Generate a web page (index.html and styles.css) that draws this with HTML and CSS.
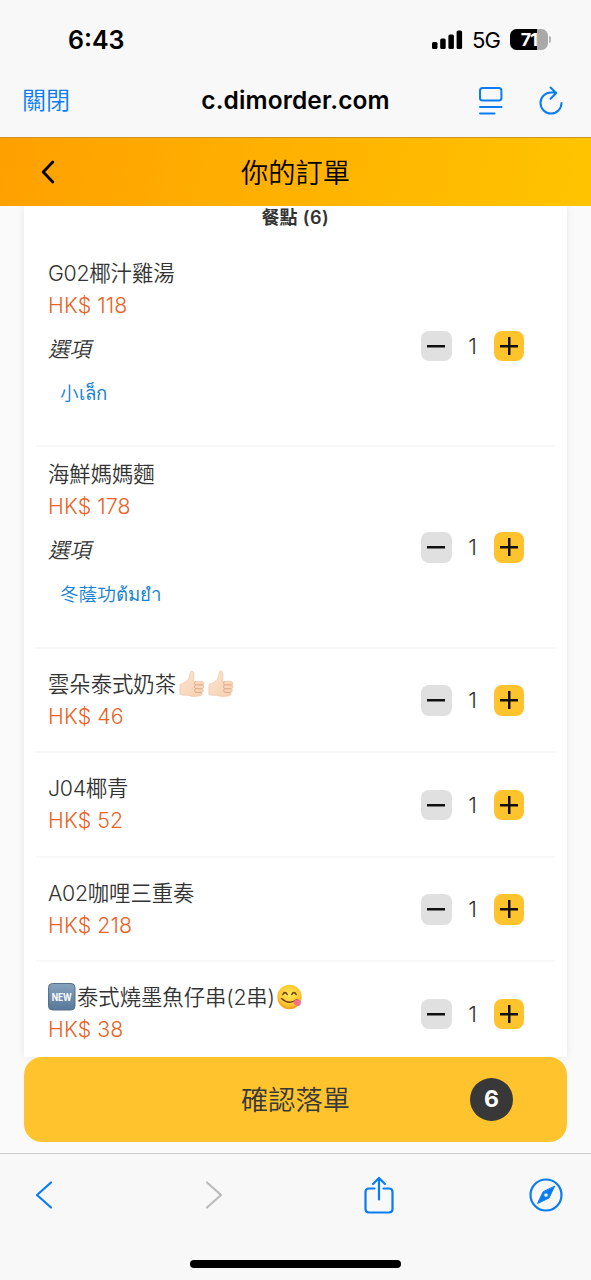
FILE: index.html
```
<!DOCTYPE html>
<html lang="zh-Hant">
<head>
<meta charset="utf-8">
<title>你的訂單</title>
<link rel="stylesheet" href="styles.css">
</head>
<body>
<svg class="defs" aria-hidden="true">
  <defs>
    <linearGradient id="skin" x1="0" y1="0" x2="1" y2="1"><stop offset="0" stop-color="#fce5d0"/><stop offset="1" stop-color="#f5cfb0"/></linearGradient>
    <linearGradient id="steel" x1="0" y1="0" x2="0" y2="1"><stop offset="0" stop-color="#86a3bf"/><stop offset="1" stop-color="#56789a"/></linearGradient>
    <radialGradient id="face" cx=".5" cy=".4" r=".6"><stop offset="0" stop-color="#ffe65a"/><stop offset=".7" stop-color="#fdc92f"/><stop offset="1" stop-color="#f09a1c"/></radialGradient>
    <symbol id="thumb" viewBox="0 0 28 28">
      <path d="M2 14.500C5 13.500 8.800 11.500 10.500 9C11.500 7 11.800 4.500 12.200 2.500C12.600 .8 14.500 .6 15.300 2C16.500 4.200 15.900 8 15.200 11.300H23.500C26.400 11.500 26.600 14.500 24.900 15C26.700 15.800 26.400 18.300 24.500 18.800C26 19.800 25.500 22 23.700 22.400C24.700 23.600 24 25.600 22 25.800C18.500 26.600 13.500 26.800 9.500 25.200C6 25.700 3.500 25 1.800 24.200Z" fill="url(#skin)" stroke="#e9b892" stroke-width=".5"/>
      <path d="M24.900 15L17.800 14.800M24.500 18.800L17.500 18.600M23.700 22.400L17.500 22.300M17.500 11.500C16.300 12.700 16.300 14.300 17.800 14.800C16.300 15.700 16.300 18 17.500 18.600C16.500 19.600 16.500 21.600 17.500 22.300" fill="none" stroke="#d79c7b" stroke-width=".8"/>
    </symbol>
  </defs>
</svg>
<div class="screen">
  <header class="status">
    <span class="clock">6:43</span>
    <div class="status-right">
      <svg class="signal" width="31" height="20" viewBox="0 0 31 20"><rect x="0" y="12" width="5.500" height="7" rx="1.600"/><rect x="8.200" y="8.500" width="5.500" height="10.500" rx="1.600"/><rect x="16.400" y="4.500" width="5.500" height="14.500" rx="1.600"/><rect x="24.600" y=".5" width="5.500" height="18.500" rx="1.600"/></svg>
      <span class="network">5G</span>
      <div class="battery"><span>71</span></div>
      <i class="battery-tip"></i>
    </div>
  </header>
  <nav class="browser-bar">
    <span class="close">關閉</span>
    <span class="host">c.dimorder.com</span>
    <div class="browser-actions">
      <svg width="24" height="30" viewBox="0 0 24 30"><rect x="1" y="2" width="21.400" height="12.600" rx="2.600"/><path d="M1 21H22.500M1 27.500H15.500"/></svg>
      <svg width="24" height="30" viewBox="0 0 24 30"><path d="M22.500 17A10.500 10.500 0 1 1 12 6.500H17M11.500 1.500L17.200 7L11.500 12.700"/></svg>
    </div>
  </nav>
  <div class="title-bar">
    <svg class="back" width="14" height="24" viewBox="0 0 14 24"><path d="M11.800 2L2.200 12L11.800 22"/></svg>
    <h1>你的訂單</h1>
  </div>
  <main class="page">
    <section class="card">
      <h2>餐點<span> (6)</span></h2>
      <article class="item detailed">
        <div class="info"><h3><span>G02</span>椰汁雞湯</h3><p class="price">HK$ 118</p><p class="option">選項</p><p class="choice">小<span>เล็ก</span></p></div>
        <div class="stepper"><button class="minus"></button><b>1</b><button class="plus"></button></div>
      </article>
      <article class="item detailed">
        <div class="info"><h3>海鮮媽媽麵</h3><p class="price">HK$ 178</p><p class="option">選項</p><p class="choice">冬蔭功<span>ต้มยำ</span></p></div>
        <div class="stepper"><button class="minus"></button><b>1</b><button class="plus"></button></div>
      </article>
      <article class="item">
        <div class="info"><h3>雲朵泰式奶茶<svg class="emoji thumb"><use href="#thumb"/></svg><svg class="emoji thumb"><use href="#thumb"/></svg></h3><p class="price">HK$ 46</p></div>
        <div class="stepper"><button class="minus"></button><b>1</b><button class="plus"></button></div>
      </article>
      <article class="item">
        <div class="info"><h3><span>J04</span>椰青</h3><p class="price">HK$ 52</p></div>
        <div class="stepper"><button class="minus"></button><b>1</b><button class="plus"></button></div>
      </article>
      <article class="item">
        <div class="info"><h3><span>A02</span>咖哩三重奏</h3><p class="price">HK$ 218</p></div>
        <div class="stepper"><button class="minus"></button><b>1</b><button class="plus"></button></div>
      </article>
      <article class="item">
        <div class="info"><h3><svg class="emoji new" viewBox="0 0 28 28"><rect x=".5" y=".5" width="26.500" height="26.500" rx="4" fill="url(#steel)" stroke="#58718a"/><text x="13.700" y="17.600" text-anchor="middle" textLength="20" lengthAdjust="spacingAndGlyphs">NEW</text></svg>泰式燒墨魚仔串<span>(2</span>串<span>)</span><svg class="emoji yum" viewBox="0 0 26 26"><circle cx="12.500" cy="13" r="12.200" fill="url(#face)"/><path d="M5.800 10.500Q8 6.500 10.200 10.500M14.700 10.500Q17 6.500 19.200 10.500" fill="none" stroke="#6b3d12" stroke-width="1.500" stroke-linecap="round"/><path d="M4.500 14.500Q12 21.500 20 15.500" fill="none" stroke="#7b3b10" stroke-width="1.500" stroke-linecap="round"/><path d="M16.200 18C18.500 14.800 21.500 14.300 23.300 16.700C24.800 19 23 22.500 20.500 22C18.500 21.500 16.500 20 16.200 18Z" fill="#f4708a"/></svg></h3><p class="price">HK$ 38</p></div>
        <div class="stepper"><button class="minus"></button><b>1</b><button class="plus"></button></div>
      </article>
    </section>
    <div class="confirm"><span>確認落單</span><b class="count">6</b></div>
  </main>
  <footer class="toolbar">
    <div class="tools">
      <svg width="18" height="30" viewBox="0 0 18 30"><path d="M16 2.500L2 15L16 27.500"/></svg>
      <svg class="disabled" width="18" height="30" viewBox="0 0 18 30"><path d="M2 2.500L16 15L2 27.500"/></svg>
      <svg width="30" height="38" viewBox="0 0 30 38"><path d="M10.500 12.500H5Q1.500 12.500 1.500 16V33Q1.500 36.500 5 36.500H25Q28.500 36.500 28.500 33V16Q28.500 12.500 25 12.500H19.500M15 23.500V2M9 8L15 2L21 8"/></svg>
      <svg width="34" height="34" viewBox="0 0 34 34"><circle cx="17" cy="17" r="15.500"/><path class="needle" fill-rule="evenodd" d="M25.500 8.500L20 20L8.500 25.500L14 14ZM17 14.700A2.300 2.300 0 1 0 17 19.300A2.300 2.300 0 1 0 17 14.700Z"/></svg>
    </div>
    <i class="home"></i>
  </footer>
</div>
</body>
</html>
```

FILE: styles.css
```
* { box-sizing: border-box; margin: 0; padding: 0; }
body { background: #f8f8f8; font-family: Inter, "Noto Sans CJK TC", "Noto Sans", sans-serif; }
.defs { position: absolute; width: 0; height: 0; }
.screen { width: 591px; height: 1280px; overflow: hidden; display: flex; flex-direction: column; }
.status { height: 75px; padding: 4px 40px 0 68px; display: flex; align-items: center; justify-content: space-between; flex: none; }
.clock { font-size: 25px; font-weight: 600; }
.status-right { display: flex; align-items: center; }
.signal { margin-right: 9px; }
.network { font-size: 22px; letter-spacing: -.8px; width: 38px; }
.battery { width: 38px; height: 21px; border-radius: 6.500px; background: linear-gradient(90deg, #000 71%, #a9a9a9 71%); color: #fff; display: flex; align-items: center; justify-content: center; font-size: 18px; font-weight: 700; letter-spacing: -.8px; }
.battery-tip { width: 2px; height: 7px; margin-left: 1px; border-radius: 0 3px 3px 0; background: #b5b5b5; }
.browser-bar { height: 62px; padding: 0 28px 12px 22px; display: grid; grid-template-columns: 1fr auto 1fr; align-items: center; flex: none; }
.close { color: #087cf5; font-size: 24px; font-weight: 350; padding-bottom: 3px; }
.host { font-size: 24.500px; font-weight: 600; letter-spacing: .1px; padding-left: 6px; }
.browser-actions { justify-self: end; display: flex; gap: 36px; padding-top: 1px; }
.browser-actions svg, .tools svg, .back { fill: none; stroke: #087cf5; stroke-width: 2.200; stroke-linecap: round; stroke-linejoin: round; }
.browser-actions svg { stroke-width: 2; }
.title-bar { height: 69px; padding: 0 41px; border-top: 1px solid #c99327; background: linear-gradient(100deg, #ffa000, #ffc400); display: grid; grid-template-columns: 14px 1fr 14px; align-items: center; flex: none; }
.title-bar .back { stroke: #000; stroke-width: 2.800; }
.title-bar h1 { text-align: center; font-size: 27.200px; font-weight: 350; padding-bottom: 2px; }
.page { height: 947px; flex: none; padding: 0 24px; background: #fafafa; overflow: hidden; }
.card { height: 850.500px; padding: 1px 12px 0; background: #fff; box-shadow: 0 0 8px rgba(0,0,0,.08); overflow: hidden; color: #333; }
.card h2 { height: 38.500px; line-height: 22px; text-align: center; font-size: 18px; font-weight: 600; white-space: pre; }
.card h2 span { letter-spacing: .6px; }
.item { height: 104.500px; padding: 0 31px 0 12px; border-bottom: 2px solid #f7f7f7; display: flex; align-items: center; justify-content: space-between; }
.item.detailed { height: 201.500px; }
.item.detailed .info { height: 177px; }
.info { line-height: 32px; font-size: 21.330px; font-weight: 350; }
.info h3 { height: 32px; display: flex; align-items: center; font-size: 21.330px; font-weight: 350; }
.info h3 span { letter-spacing: -.3px; }
.price { height: 32px; color: #ea6226; letter-spacing: .1px; }
.option { height: 32px; margin: 12px 0; font-style: italic; }
.choice { height: 32px; padding-left: 12px; font-size: 18.600px; color: #1583d2; }
.stepper { display: flex; align-items: center; padding-top: 1px; }
.stepper button { width: 30.500px; height: 30.500px; border: 0; border-radius: 8px; background: linear-gradient(#111, #111) center / 18px 2.500px no-repeat, #e0e0e0; }
.stepper .plus { background: linear-gradient(#111, #111) center / 18px 2.500px no-repeat, linear-gradient(#111, #111) center / 2.500px 18px no-repeat, #ffc42d; }
.stepper b { width: 42px; text-align: center; font-size: 22px; font-weight: 350; line-height: 30px; }
.emoji { flex: none; }
.thumb { width: 28px; height: 28px; margin-right: -1px; margin-left: 2px; }
.new { width: 28px; height: 28px; margin-right: 1px; }
.new text { font: 700 10px Inter, sans-serif; fill: #fff; }
.yum { width: 26px; height: 26px; margin-left: 2px; }
.confirm { height: 85px; border-radius: 18px; background: #ffc42d; color: #383838; display: grid; grid-template-columns: 1fr auto 1fr; align-items: center; font-size: 27.200px; font-weight: 350; }
.confirm span { grid-column: 2; padding-bottom: 3px; }
.count { width: 43px; height: 43px; justify-self: end; margin-right: 54px; border-radius: 50%; background: #383838; color: #fff; display: flex; align-items: center; justify-content: center; font-size: 23px; }
.toolbar { flex: 1; border-top: 1px solid #ccc; display: flex; flex-direction: column; align-items: center; }
.tools { width: 100%; height: 81px; padding: 0 28px 0 35px; display: grid; grid-template-columns: 170px 159px 165px 34px; align-items: center; }
.tools .disabled { stroke: #bbb; }
.tools .needle { fill: #087cf5; stroke-width: 1; }
.home { width: 211px; height: 8px; margin-top: 25px; border-radius: 4px; background: #000; }
```
